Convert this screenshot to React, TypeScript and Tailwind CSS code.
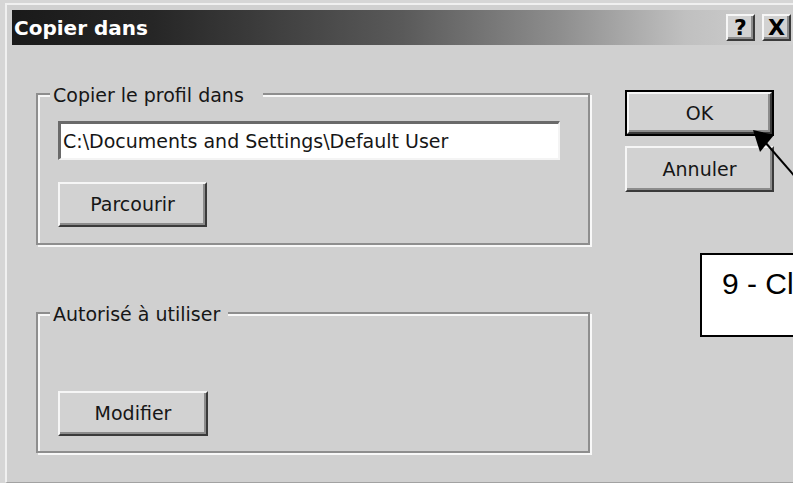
import React from 'react';

// Classic raised 3D button look (light top/left, dark bottom/right)
const raised =
  'bg-[#d2d2d2] border-2 border-t-[#f6f6f6] border-l-[#f6f6f6] border-r-[#3a3a3a] border-b-[#3a3a3a] shadow-[inset_-2px_-2px_0_#8c8c8c]';

// Etched frame used by the group boxes
const etched =
  'border-2 border-[#8e8e8e] shadow-[2px_2px_0_#f8f8f8,inset_2px_2px_0_#f8f8f8]';

const uiFont = "font-['DejaVu_Sans',sans-serif]";

const WinButton: React.FC<{ label: string; className?: string }> = ({ label, className = '' }) => (
  <button
    type="button"
    className={`${raised} ${uiFont} flex items-center justify-center text-[19px] leading-none text-[#161616] ${className}`}
  >
    {label}
  </button>
);

const GroupBox: React.FC<{ title: string; titlePad: string; className?: string; children: React.ReactNode }> = ({
  title,
  titlePad,
  className = '',
  children,
}) => (
  <div className={`relative ${etched} ${className}`}>
    <span
      className={`absolute left-[12px] top-[-11px] bg-[#d0d0d0] pl-[3px] ${titlePad} ${uiFont} text-[19px] leading-[22px] text-[#161616] whitespace-nowrap`}
    >
      {title}
    </span>
    {children}
  </div>
);

const TitleButton: React.FC<{ glyph: string }> = ({ glyph }) => (
  <div
    className={`${raised} w-[29px] h-[27px] flex items-center justify-center font-['DejaVu_Sans',sans-serif] font-bold text-[22px] leading-none text-black`}
  >
    {glyph}
  </div>
);

export default function App() {
  return (
    <div className="relative w-[793px] h-[483px] overflow-hidden bg-[#d6d6d6] pt-[3px] pl-[5px]">
      <div className="w-[790px] h-[480px] border-t-2 border-l-2 border-[#f0f0f0] border-b border-b-[#a2a2a2] bg-[#d0d0d0] pt-[5px] pl-[5px] flex flex-col">
        {/* Title bar */}
        <div className="h-[35px] shrink-0 flex items-center pl-[2px] pr-[4px] bg-[linear-gradient(to_right,#1a1a1a_0%,#262626_18%,#5a5a5a_50%,#8e8e8e_70%,#c0c0c0_86%,#d2d2d2_100%)]">
          <span className="font-['DejaVu_Sans',sans-serif] font-bold text-[20px] leading-[24px] text-white">
            Copier dans
          </span>
          <div className="ml-auto flex gap-[7px]">
            <TitleButton glyph="?" />
            <TitleButton glyph="X" />
          </div>
        </div>

        {/* Client area */}
        <div className="flex pl-[24px] pt-[45px]">
          <div className="w-[554px] pt-[3px] flex flex-col">
            <GroupBox title="Copier le profil dans" titlePad="pr-[19px]" className="h-[152px] pl-[20px] pt-[26px]">
              <div
                className={`w-[502px] h-[39px] bg-white border-t-[3px] border-l-[3px] border-t-[#6a6a6a] border-l-[#6a6a6a] border-b-2 border-r-2 border-b-[#f4f4f4] border-r-[#f4f4f4] flex items-center pl-[2px] ${uiFont} text-[19px] leading-none text-[#161616] whitespace-nowrap`}
              >
                C:\Documents and Settings\Default User
              </div>
              <WinButton label="Parcourir" className="mt-[22px] w-[149px] h-[45px]" />
            </GroupBox>

            <GroupBox title="Autorisé à utiliser" titlePad="pr-[8px]" className="mt-[67px] h-[141px] pl-[20px] pt-[77px]">
              <WinButton label="Modifier" className="w-[150px] h-[45px]" />
            </GroupBox>
          </div>

          <div className="ml-[35px] flex flex-col">
            <div className="w-[149px] h-[46px] border-2 border-black">
              <WinButton label="OK" className="w-full h-full" />
            </div>
            <WinButton label="Annuler" className="mt-[10px] w-[149px] h-[46px]" />
          </div>
        </div>
      </div>

      {/* Callout note */}
      <div className="absolute left-[700px] top-[253px] w-[320px] h-[84px] border-2 border-black bg-white pl-[20px] pt-[14px] font-['Liberation_Sans',Arial,sans-serif] text-[30px] leading-[30px] text-black whitespace-nowrap">
        9 - Cliquer sur OK
      </div>

      {/* Pointer arrow to the OK button */}
      <svg className="absolute left-0 top-0 pointer-events-none" width="793" height="483" viewBox="0 0 793 483">
        <line x1="850" y1="240" x2="765" y2="142" stroke="#000" strokeWidth="2" />
        <polygon points="753,130 774,135 760,152" fill="#000" />
      </svg>
    </div>
  );
}
